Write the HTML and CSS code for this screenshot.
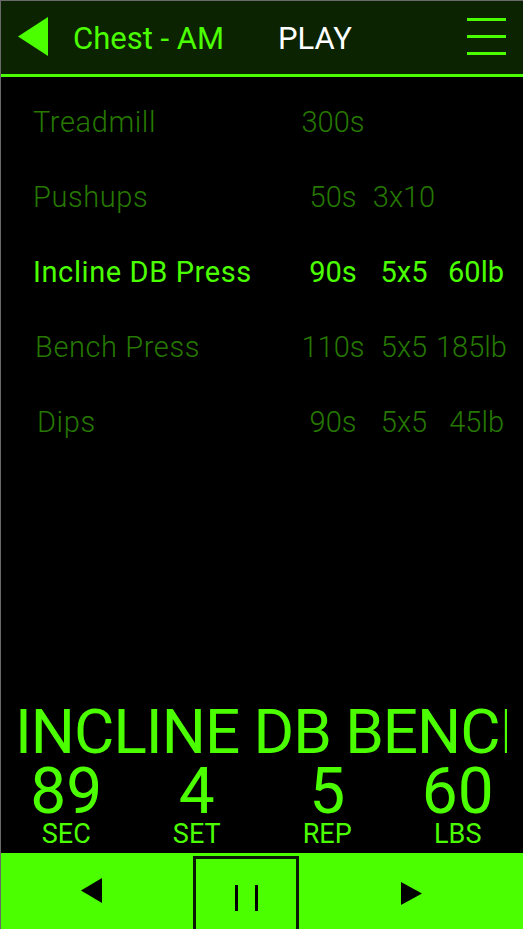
FILE: index.html
```html
<!DOCTYPE html>
<html>
<head>
<meta charset="utf-8">
<link rel="stylesheet" href="styles.css">
</head>
<body>
<div class="app">
  <header class="topbar">
    <svg class="back" width="30" height="39" viewBox="0 0 30 39"><polygon points="30,0 30,39 0,19.5" fill="#4cff00"/></svg>
    <span class="title">Chest - AM</span>
    <span class="mode">PLAY</span>
    <svg class="menu" width="39" height="37" viewBox="0 0 39 37"><rect x="0" y="0" width="39" height="3" fill="#4cff00"/><rect x="0" y="17" width="39" height="3" fill="#4cff00"/><rect x="0" y="34" width="39" height="3" fill="#4cff00"/></svg>
  </header>

  <div class="list">
    <div class="row"><span class="name">Treadmill</span><span class="c2">300s</span><span class="c3"></span><span class="c4"></span></div>
    <div class="row"><span class="name">Pushups</span><span class="c2">50s</span><span class="c3">3x10</span><span class="c4"></span></div>
    <div class="row active"><span class="name">Incline DB Press</span><span class="c2">90s</span><span class="c3">5x5</span><span class="c4">60lb</span></div>
    <div class="row"><span class="name shift1">Bench Press</span><span class="c2">110s</span><span class="c3">5x5</span><span class="c4">185lb</span></div>
    <div class="row"><span class="name shift2">Dips</span><span class="c2">90s</span><span class="c3">5x5</span><span class="c4">45lb</span></div>
  </div>

  <div class="spacer"></div>

  <div class="current">
    <div class="big-title">INCLINE DB BENCH PRESS</div>
    <div class="stats">
      <div class="stat"><span class="num">89</span><span class="lbl">SEC</span></div>
      <div class="stat"><span class="num">4</span><span class="lbl">SET</span></div>
      <div class="stat"><span class="num">5</span><span class="lbl">REP</span></div>
      <div class="stat"><span class="num">60</span><span class="lbl">LBS</span></div>
    </div>
  </div>

  <div class="controls">
    <div class="ctl prev"><svg width="21" height="25" viewBox="0 0 21 25"><polygon points="21,0 21,25 0,12.5" fill="#000"/></svg></div>
    <div class="ctl pause"><span class="bar"></span><span class="bar"></span></div>
    <div class="ctl next"><svg width="21" height="23" viewBox="0 0 21 23"><polygon points="0,0 21,11.5 0,23" fill="#000"/></svg></div>
  </div>
</div>
</body>
</html>
```

FILE: styles.css
```css
* { box-sizing: border-box; }
html, body { margin: 0; padding: 0; background: #000; }
body { font-family: Roboto, "Liberation Sans", sans-serif; }

.app {
  width: 523px;
  height: 929px;
  display: flex;
  flex-direction: column;
  border-left: 1px solid #6a6a6a;
  border-top: 1px solid #6a6a6a;
  overflow: hidden;
  background: #000;
}

.topbar {
  height: 76px;
  flex: none;
  background: #0b2300;
  border-bottom: 3px solid #4cff00;
  display: flex;
  align-items: center;
  padding: 0 17px 3px 17px;
}
.back { flex: none; }
.title {
  margin-left: 25px;
  width: 205px;
  color: #4cff00;
  font-size: 31px;
  font-weight: 400;
  padding-top: 5px;
}
.mode {
  color: #fff;
  font-size: 31px;
  padding-top: 5px;
}
.menu { margin-left: auto; flex: none; margin-top: 1px; }

.list { padding: 8px 19px 0 32px; flex: none; }
.row {
  display: grid;
  grid-template-columns: 1fr 66px 70px 68px;
  height: 75px;
  line-height: 75px;
  font-size: 29px;
  font-weight: 300;
  color: #267800;
}
.row.active { color: #4cff00; font-weight: 400; }
.name { white-space: nowrap; letter-spacing: 0.6px; }
.shift1 { padding-left: 2px; }
.shift2 { padding-left: 4px; }
.c2 { text-align: center; }
.c3 { text-align: center; padding-left: 6px; }
.c4 { text-align: right; }

.spacer { flex: 1; }

.current { flex: none; color: #4cff00; }
.big-title {
  margin: 0 16px 0 14px;
  overflow: hidden;
  white-space: nowrap;
  font-size: 62px;
  line-height: 60px;
  letter-spacing: -1px;
}
.stats {
  display: grid;
  grid-template-columns: repeat(4, 1fr);
  margin-top: 2px;
}
.stat { display: flex; flex-direction: column; align-items: center; }
.num { font-size: 64px; line-height: 56px; }
.lbl { font-size: 27px; line-height: 28px; margin-bottom: 5px; }

.controls {
  height: 76px;
  flex: none;
  background: #4cff00;
  display: flex;
}
.ctl { display: flex; align-items: center; justify-content: center; }
.prev { width: 192px; padding-right: 12px; padding-bottom: 1px; }
.pause {
  width: 106px;
  margin-top: 3px;
  height: 80px;
  border: 3px solid #0b1a05;
  gap: 17px;
  align-items: flex-start;
  padding-top: 26px;
}
.bar { width: 3px; height: 26px; background: #000; }
.next { flex: 1; padding-left: 0; padding-top: 5px; }
```
